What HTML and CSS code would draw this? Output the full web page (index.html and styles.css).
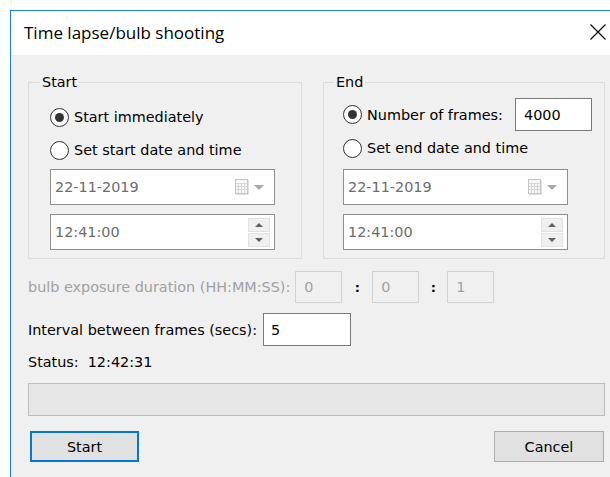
FILE: index.html
```html
<!DOCTYPE html>
<html lang="en">
<head>
<meta charset="utf-8">
<title>Time lapse/bulb shooting</title>
<link rel="stylesheet" href="styles.css">
</head>
<body>
<div class="window">
  <div class="titlebar">
    <span class="title">Time lapse/bulb shooting</span>
    <span class="close" aria-label="Close">
      <svg width="16" height="16" viewBox="0 0 16 16"><path d="M0.5 0.5 L15.5 15.5 M15.5 0.5 L0.5 15.5" stroke="#111" stroke-width="1.3" fill="none"/></svg>
    </span>
  </div>

  <div class="dialog">
    <div class="groups">
      <fieldset class="group group-start">
        <legend>Start</legend>
        <label class="opt opt-first">
          <span class="radio checked"></span>Start immediately
        </label>
        <label class="opt opt-second">
          <span class="radio"></span>Set start date and time
        </label>
        <div class="picker date disabled">
          <span class="val">22-11-2019</span>
          <span class="cal">
            <svg width="14" height="17" viewBox="0 0 14 17">
              <rect x="0.5" y="0.5" width="12" height="14" fill="#f7f7f7" stroke="#c4c4c4"/>
              <path d="M1 4.5H12.5M1 7.5H12.5M1 10.5H12.5M3.5 4V14.5M6.5 4V14.5M9.5 4V14.5" stroke="#d6d6d6" stroke-width="1"/>
              <path d="M1 15.5H13.5V1" stroke="#e0e0e0" stroke-width="1" fill="none"/>
            </svg>
          </span>
          <svg class="drop" width="10" height="5" viewBox="0 0 10 5"><path d="M0 0H10L5 5Z" fill="#a8a8a8"/></svg>
        </div>
        <div class="picker time disabled">
          <span class="val">12:41:00</span>
          <span class="spin">
            <span class="spin-btn"><svg width="8" height="4" viewBox="0 0 8 4"><path d="M0 4H8L4 0Z" fill="#606060"/></svg></span>
            <span class="spin-btn"><svg width="8" height="4" viewBox="0 0 8 4"><path d="M0 0H8L4 4Z" fill="#606060"/></svg></span>
          </span>
        </div>
      </fieldset>

      <fieldset class="group group-end">
        <legend>End</legend>
        <div class="opt opt-frames">
          <label class="opt-label"><span class="radio checked"></span>Number of frames:</label>
          <span class="field frames">4000</span>
        </div>
        <label class="opt opt-second-end">
          <span class="radio"></span>Set end date and time
        </label>
        <div class="picker date disabled">
          <span class="val">22-11-2019</span>
          <span class="cal">
            <svg width="14" height="17" viewBox="0 0 14 17">
              <rect x="0.5" y="0.5" width="12" height="14" fill="#f7f7f7" stroke="#c4c4c4"/>
              <path d="M1 4.5H12.5M1 7.5H12.5M1 10.5H12.5M3.5 4V14.5M6.5 4V14.5M9.5 4V14.5" stroke="#d6d6d6" stroke-width="1"/>
              <path d="M1 15.5H13.5V1" stroke="#e0e0e0" stroke-width="1" fill="none"/>
            </svg>
          </span>
          <svg class="drop" width="10" height="5" viewBox="0 0 10 5"><path d="M0 0H10L5 5Z" fill="#a8a8a8"/></svg>
        </div>
        <div class="picker time disabled">
          <span class="val">12:41:00</span>
          <span class="spin">
            <span class="spin-btn"><svg width="8" height="4" viewBox="0 0 8 4"><path d="M0 4H8L4 0Z" fill="#606060"/></svg></span>
            <span class="spin-btn"><svg width="8" height="4" viewBox="0 0 8 4"><path d="M0 0H8L4 4Z" fill="#606060"/></svg></span>
          </span>
        </div>
      </fieldset>
    </div>

    <div class="row bulb">
      <span class="muted">bulb exposure duration (HH:MM:SS):</span>
      <span class="field off">0</span>
      <span class="sep sep-a">:</span>
      <span class="field off">0</span>
      <span class="sep sep-b">:</span>
      <span class="field off">1</span>
    </div>

    <div class="row interval">
      <span>Interval between frames (secs):</span>
      <span class="field secs">5</span>
    </div>

    <div class="status">Status:<span class="status-time">12:42:31</span></div>

    <div class="progress"></div>

    <div class="buttons">
      <button class="btn btn-default">Start</button>
      <button class="btn btn-cancel">Cancel</button>
    </div>
  </div>
</div>
</body>
</html>
```

FILE: styles.css
```css
html, body {
  margin: 0;
  height: 100%;
  overflow: hidden;
  background: #ffffff;
}

body {
  font-family: "DejaVu Sans", "Liberation Sans", sans-serif;
  font-size: 14.4px;
  color: #000;
}

/* dialog frame */
.window {
  margin: 10px 0 0 10px;
  width: 600px;
  height: calc(100% - 10px);
  box-sizing: border-box;
  border-left: 1px solid #1883d7;
  border-top: 1px solid #1883d7;
  display: flex;
  flex-direction: column;
}

.titlebar {
  height: 44px;
  flex: none;
  background: #fff;
  display: flex;
  align-items: center;
  justify-content: space-between;
  padding: 0 4px 0 13px;
}

.title {
  font-family: "Open Sans", "Noto Sans", sans-serif;
  font-size: 17px;
  color: #000;
  margin-top: -1px;
}

.close {
  display: flex;
  width: 16px;
  height: 16px;
  margin-top: -2px;
}

.dialog {
  flex: 1;
  background: #f0f0f0;
  padding: 17px 5px 0 17px;
}

/* group boxes */
.groups {
  display: flex;
  gap: 21px;
}

.group {
  margin: 0;
  min-width: 0;
  border: 1px solid #dcdcdc;
  padding: 0;
}

.group legend {
  padding: 0 2px;
  line-height: 20px;
}

.group-start {
  width: 274px;
  box-sizing: border-box;
  padding: 13px 0 8px 21px;
}

.group-start legend { margin-left: -10px; }

.group-end {
  flex: 1;
  padding: 6px 12px 8px 19px;
}

.group-end legend { margin-left: -9px; }

.opt {
  display: flex;
  align-items: center;
  height: 24px;
  white-space: nowrap;
}

.opt-second { margin-top: 9px; }

.opt-frames {
  height: 33px;
  justify-content: space-between;
}

.opt-label {
  display: flex;
  align-items: center;
}

.opt-second-end { margin-top: 5px; }

.radio {
  width: 19px;
  height: 19px;
  box-sizing: border-box;
  border: 1px solid #333;
  border-radius: 50%;
  background: #fff;
  margin-right: 5px;
  flex: none;
  display: flex;
  align-items: center;
  justify-content: center;
}

.radio.checked::after {
  content: "";
  width: 9px;
  height: 9px;
  border-radius: 50%;
  background: #333;
}

/* date and time pickers */
.picker {
  width: 225px;
  height: 36px;
  box-sizing: border-box;
  border: 1px solid #8e8e8e;
  background: #fff;
  display: flex;
  align-items: center;
  padding-left: 4px;
}

.picker.disabled .val { color: #6d6d6d; }

.date { margin-top: 7px; }
.group-end .date { margin-top: 9px; }
.time { margin-top: 9px; }

.val { flex: 1; }

.cal {
  display: flex;
  margin-right: 5px;
  margin-top: 1px;
}

.drop { margin-right: 10px; }

.spin {
  display: flex;
  flex-direction: column;
  gap: 1px;
  margin-right: 4px;
}

.spin-btn {
  width: 22px;
  height: 14px;
  box-sizing: border-box;
  background: #f0f0f0;
  border: 1px solid #e2e2e2;
  display: flex;
  align-items: center;
  justify-content: center;
}

/* edit fields */
.field {
  height: 33px;
  box-sizing: border-box;
  border: 1px solid #7a7a7a;
  background: #fff;
  display: flex;
  align-items: center;
  padding-left: 7px;
}

.frames {
  width: 77px;
  padding-left: 8px;
}

.row {
  display: flex;
  align-items: center;
  white-space: nowrap;
}

.bulb {
  margin-top: 12px;
  height: 32px;
}

.muted { color: #a0a0a0; margin-right: 5px; }

.field.off {
  width: 47px;
  height: 32px;
  background: #f0f0f0;
  border-color: #d2d2d2;
  color: #a0a0a0;
  padding-left: 8px;
}

.sep {
  text-align: center;
  color: #000;
  font-weight: bold;
  font-size: 13px;
}
.sep-a { width: 30px; }
.sep-b { width: 28px; }

.interval {
  margin-top: 10px;
  height: 33px;
}

.secs {
  width: 88px;
  margin-left: 6px;
}

.status {
  margin-top: 6px;
  line-height: 20px;
}

.status-time { margin-left: 9px; }

.progress {
  margin-top: 11px;
  height: 33px;
  box-sizing: border-box;
  border: 1px solid #bcbcbc;
  background: #e6e6e6;
}

.buttons {
  margin-top: 15px;
  display: flex;
  justify-content: space-between;
  padding: 0 1px 0 2px;
}

.btn {
  font: inherit;
  color: #000;
  height: 31px;
  box-sizing: border-box;
  background: #e1e1e1;
  padding: 0;
}

.btn-default {
  width: 109px;
  border: 2px solid #0078d7;
}

.btn-cancel {
  width: 110px;
  border: 1px solid #adadad;
}
```
